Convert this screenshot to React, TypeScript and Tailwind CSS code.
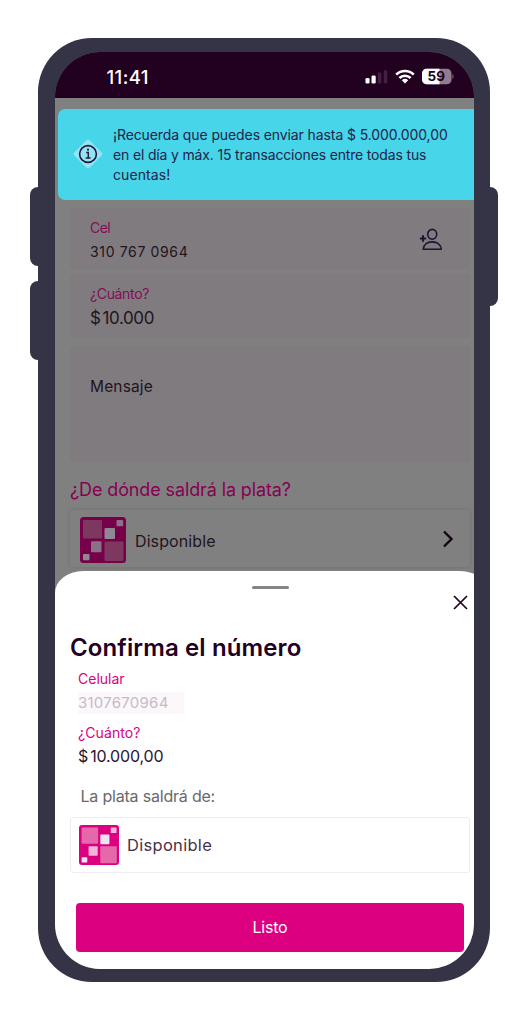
import type { ReactNode } from "react";

function Label({ className, children }: { className: string; children: ReactNode }) {
  return <div className={`whitespace-nowrap ${className}`}>{children}</div>;
}

function Tiles({ className, dim = false }: { className: string; dim?: boolean }) {
  const base = dim ? "#76014a" : "#dc0081";
  const soft = dim ? "#7c385f" : "#e568aa";
  const pale = dim ? "#8c7186" : "#f1b6d8";
  const light = dim ? "#8f8893" : "#ece3f1";
  return (
    <svg className={className} viewBox="0 0 46 46">
      <rect width="46" height="46" rx="3.5" fill={base} />
      <rect x="3" y="3" width="19" height="18.5" rx="1.2" fill={soft} />
      <rect x="24.5" y="24.5" width="19" height="19.5" rx="1.2" fill={soft} />
      <rect x="36.5" y="3" width="6.7" height="6.2" rx="1" fill={pale} />
      <rect x="24.5" y="11" width="10.5" height="11" rx="1" fill={light} />
      <rect x="11" y="24.3" width="10.5" height="11" rx="1" fill={pale} />
      <rect x="3" y="37" width="6.5" height="6.2" rx="1" fill={light} />
    </svg>
  );
}

function StatusBar() {
  return (
    <div className="flex h-[46px] shrink-0 items-center bg-[#22001f] pr-[20px] pl-[52px] text-white">
      <Label className="pt-[3px] text-[18.5px] leading-6 font-medium tracking-[0.4px]">11:41</Label>
      <svg className="mt-[3px] ml-auto" width="89" height="18" viewBox="0 0 89 18">
        <rect x="0.5" y="10" width="4" height="5.5" rx="1.3" fill="#fff" />
        <rect x="6.5" y="7.5" width="4.2" height="8" rx="1.3" fill="#fff" />
        <rect x="12.8" y="4.5" width="3.5" height="11" rx="1.2" fill="#432041" />
        <rect x="18.7" y="2.3" width="3.5" height="13.2" rx="1.2" fill="#432041" />
        <g fill="none" stroke="#fff" strokeWidth="2.7">
          <path d="M31.2 6.6c5-4.8 12.6-4.8 17.6 0" />
          <path d="M34.4 10c3.2-3 8-3 11.2 0" />
        </g>
        <path d="M36.8 12.2a4.7 4.7 0 0 1 6.4 0L40 15.6Z" fill="#fff" />
        <clipPath id="charge">
          <rect x="57" y="0.5" width="29.5" height="16" rx="5" />
        </clipPath>
        <g clipPath="url(#charge)">
          <rect x="57" y="0.5" width="30" height="16" fill="#917d90" />
          <rect x="57" y="0.5" width="17.5" height="16" fill="#fff" />
        </g>
        <path d="M87.5 6.2c1.3.5 1.3 4.1 0 4.6Z" fill="#917d90" />
        <text x="71.3" y="13.2" textAnchor="middle" fontFamily="Inter" fontWeight="700" fontSize="13.5" fill="#22001f">59</text>
      </svg>
    </div>
  );
}

function Toast() {
  return (
    <div className="mt-[10.5px] ml-[3.5px] flex h-[91.5px] shrink-0 items-center rounded-l-[7px] bg-[#46d5e9] text-[#24234a]">
      <svg className="ml-[14px] shrink-0" width="32" height="32" viewBox="0 0 32 32">
        <rect x="5.3" y="5.3" width="21.4" height="21.4" rx="2" transform="rotate(45 16 16)" fill="#91e5f2" />
        <circle cx="16" cy="16" r="8.4" fill="none" stroke="#25193f" strokeWidth="1.6" />
        <path d="M14.2 14.4h2.1v5.3M13.7 19.9h4.9" fill="none" stroke="#25193f" strokeWidth="1.5" />
        <circle cx="16" cy="11.7" r="1.1" fill="#25193f" />
      </svg>
      <div className="ml-[9px] pt-[2px] text-[14px] leading-[20.3px]">
        <Label className="tracking-[-0.1px]">¡Recuerda que puedes enviar hasta $ 5.000.000,00</Label>
        <Label className="tracking-[-0.16px]">en el día y máx. 15 transacciones entre todas tus</Label>
        <Label className="tracking-[0.1px]">cuentas!</Label>
      </div>
    </div>
  );
}

function TransferForm() {
  return (
    <div className="flex flex-col pr-[3.5px] pl-[15.5px] text-[#231420]">
      <div className="mt-2 flex h-[61px] items-start justify-between rounded bg-[#7f7b7f] pt-[10px] pr-[27px] pl-[20px]">
        <div>
          <Label className="text-[14px] leading-5 tracking-[-0.6px] text-[#870b59]">Cel</Label>
          <Label className="mt-[4px] text-[14px] leading-5 tracking-[0.65px]">310 767 0964</Label>
        </div>
        <svg className="mt-[9px]" width="25" height="25" viewBox="0 0 25 25" fill="none" stroke="#231035" strokeWidth="1.6" strokeLinejoin="round">
          <ellipse cx="14.2" cy="7.3" rx="4.5" ry="4.9" />
          <path d="M5.2 22.3c.3-4.6 4-7.4 9-7.4s8.7 2.8 9.1 7.4Z" />
          <path d="M1.9 11.5h6.2M5 8.3v6.4" strokeWidth="2" />
        </svg>
      </div>
      <div className="mt-[5px] h-[64px] rounded bg-[#7f7b7f] pt-[10px] pl-[20px]">
        <Label className="text-[14px] leading-5 tracking-[-0.35px] text-[#870b59]">¿Cuánto?</Label>
        <Label className="mt-[2px] text-[17px] leading-6 tracking-[-0.4px]"><span className="mr-[2px]">$</span>10.000</Label>
      </div>
      <div className="mt-[8px] h-[116px] rounded bg-[#7f7b7f] pt-[29px] pl-[20px]">
        <Label className="text-[15.5px] leading-6 tracking-[0.15px]">Mensaje</Label>
      </div>
      <Label className="mt-[16px] text-[18px] leading-6 tracking-[-0.12px] text-[#870052]">¿De dónde saldrá la plata?</Label>
      <div className="mt-[8px] flex h-[57px] items-center rounded-[3px] bg-[#808080] pr-[16px] pl-[10px] shadow-[0_0_4px_0_#6e6e6e]">
        <Tiles dim className="mt-0.5 h-[46px] w-[46px]" />
        <Label className="mt-1 ml-[9px] text-[16px] leading-6 tracking-[0.1px]">Disponible</Label>
        <svg className="ml-auto" width="12" height="18" viewBox="0 0 12 18" fill="none" stroke="#160515" strokeWidth="2.4">
          <path d="M2 1.5 9.5 9 2 16.5" />
        </svg>
      </div>
    </div>
  );
}

function ConfirmSheet() {
  return (
    <div className="mt-[4px] -mr-[14px] flex h-[398px] shrink-0 flex-col rounded-t-[28px_22px] bg-white pr-[17px] pl-[15.5px] text-[#2c1330]">
      <div className="mx-auto mt-[14.5px] h-[3px] w-[37px] shrink-0 rounded-full bg-[#858387]" />
      <svg className="mt-[5px] mr-[1.5px] ml-auto shrink-0" width="17" height="17" viewBox="0 0 17 17" fill="none" stroke="#24001f" strokeWidth="1.7">
        <path d="m2 2 13 13M15 2 2 15" />
      </svg>
      <Label className="mt-[21.5px] text-[24px] leading-8 font-semibold tracking-[0.12px] text-[#220023]">Confirma el número</Label>
      <div className="flex flex-col pl-2">
        <Label className="mt-[4.5px] text-[14px] leading-5 text-[#dc0081]">Celular</Label>
        <Label className="mt-[3.5px] h-[22px] w-[106px] bg-[#fcf7fb] text-[15px] leading-[22px] tracking-[0.25px] text-[#c5bcc4]">3107670964</Label>
        <Label className="mt-[9px] text-[14px] leading-5 tracking-[0.1px] text-[#dc0081]">¿Cuánto?</Label>
        <Label className="mt-[1px] text-[16px] leading-6 tracking-[-0.15px]"><span className="mr-[2px]">$</span>10.000,00</Label>
        <Label className="mt-[16px] pl-[2.5px] text-[16px] leading-6 tracking-[-0.2px] text-[#6a686b]">La plata saldrá de:</Label>
      </div>
      <div className="mt-[8.5px] flex h-[56px] w-[400px] shrink-0 items-center rounded-[3px] border border-[#eeecef] pl-2">
        <Tiles className="h-10 w-10" />
        <Label className="ml-[8px] text-[16.5px] leading-6 tracking-[0.3px] text-[#493148]">Disponible</Label>
      </div>
      <button className="mt-[30px] ml-[6px] h-[49px] w-[388px] shrink-0 rounded bg-[#dc0081] text-[16px] tracking-[-0.2px] text-white">Listo</button>
    </div>
  );
}

export default function App() {
  return (
    <main className="flex h-[1024px] w-[505px] items-start overflow-hidden bg-white pt-[38px] pl-[29.5px] font-['Inter','Liberation_Sans',sans-serif]">
      <div className="flex shrink-0 flex-col gap-[15px] pt-[149px]">
        <div className="h-[79px] w-[8.5px] rounded-l-lg bg-[#353346]" />
        <div className="h-[79px] w-[8.5px] rounded-l-lg bg-[#353346]" />
      </div>
      <div className="h-[944px] w-[452px] shrink-0 rounded-[54px] bg-[#353346] pt-[14px] pl-[16.5px]">
        <div className="flex h-[916.5px] w-[419px] flex-col overflow-hidden rounded-[45px] bg-[#808080]">
          <StatusBar />
          <Toast />
          <TransferForm />
          <ConfirmSheet />
        </div>
      </div>
      <div className="mt-[149px] h-[119px] w-[8px] shrink-0 rounded-r-lg bg-[#353346]" />
    </main>
  );
}
